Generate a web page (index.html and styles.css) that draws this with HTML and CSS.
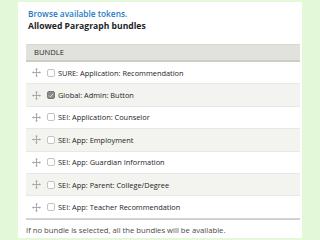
FILE: index.html
```html
<!DOCTYPE html>
<html>
<head>
<meta charset="utf-8">
<link rel="stylesheet" href="styles.css">
</head>
<body>
<div class="panel">
  <a class="tokens" href="#">Browse available tokens.</a>
  <div class="label">Allowed Paragraph bundles</div>
  <div class="table">
    <div class="head">BUNDLE</div>
    <div class="row"><span class="drag"><svg width="9" height="9" viewBox="0 0 9 9"><path d="M4.5 1v7M1 4.5h7" stroke="#a8a8a8" stroke-width="1"/><path d="M4.5 0 L3 1.6 H6 Z M4.5 9 L3 7.4 H6 Z M0 4.5 L1.6 3 V6 Z M9 4.5 L7.4 3 V6 Z" fill="#a8a8a8"/></svg></span><span class="cb"></span><span class="name">SURE: Application: Recommendation</span></div>
    <div class="row alt"><span class="drag"><svg width="9" height="9" viewBox="0 0 9 9"><path d="M4.5 1v7M1 4.5h7" stroke="#a8a8a8" stroke-width="1"/><path d="M4.5 0 L3 1.6 H6 Z M4.5 9 L3 7.4 H6 Z M0 4.5 L1.6 3 V6 Z M9 4.5 L7.4 3 V6 Z" fill="#a8a8a8"/></svg></span><span class="cb on"><svg width="7" height="7" viewBox="0 0 7 7"><path d="M1.2 3.6 L2.8 5.2 L5.8 1.6" stroke="#dcdcdc" stroke-width="1.1" fill="none"/></svg></span><span class="name">Global: Admin: Button</span></div>
    <div class="row"><span class="drag"><svg width="9" height="9" viewBox="0 0 9 9"><path d="M4.5 1v7M1 4.5h7" stroke="#a8a8a8" stroke-width="1"/><path d="M4.5 0 L3 1.6 H6 Z M4.5 9 L3 7.4 H6 Z M0 4.5 L1.6 3 V6 Z M9 4.5 L7.4 3 V6 Z" fill="#a8a8a8"/></svg></span><span class="cb"></span><span class="name">SEI: Application: Counselor</span></div>
    <div class="row alt"><span class="drag"><svg width="9" height="9" viewBox="0 0 9 9"><path d="M4.5 1v7M1 4.5h7" stroke="#a8a8a8" stroke-width="1"/><path d="M4.5 0 L3 1.6 H6 Z M4.5 9 L3 7.4 H6 Z M0 4.5 L1.6 3 V6 Z M9 4.5 L7.4 3 V6 Z" fill="#a8a8a8"/></svg></span><span class="cb"></span><span class="name">SEI: App: Employment</span></div>
    <div class="row"><span class="drag"><svg width="9" height="9" viewBox="0 0 9 9"><path d="M4.5 1v7M1 4.5h7" stroke="#a8a8a8" stroke-width="1"/><path d="M4.5 0 L3 1.6 H6 Z M4.5 9 L3 7.4 H6 Z M0 4.5 L1.6 3 V6 Z M9 4.5 L7.4 3 V6 Z" fill="#a8a8a8"/></svg></span><span class="cb"></span><span class="name">SEI: App: Guardian Information</span></div>
    <div class="row alt"><span class="drag"><svg width="9" height="9" viewBox="0 0 9 9"><path d="M4.5 1v7M1 4.5h7" stroke="#a8a8a8" stroke-width="1"/><path d="M4.5 0 L3 1.6 H6 Z M4.5 9 L3 7.4 H6 Z M0 4.5 L1.6 3 V6 Z M9 4.5 L7.4 3 V6 Z" fill="#a8a8a8"/></svg></span><span class="cb"></span><span class="name">SEI: App: Parent: College/Degree</span></div>
    <div class="row last"><span class="drag"><svg width="9" height="9" viewBox="0 0 9 9"><path d="M4.5 1v7M1 4.5h7" stroke="#a8a8a8" stroke-width="1"/><path d="M4.5 0 L3 1.6 H6 Z M4.5 9 L3 7.4 H6 Z M0 4.5 L1.6 3 V6 Z M9 4.5 L7.4 3 V6 Z" fill="#a8a8a8"/></svg></span><span class="cb"></span><span class="name">SEI: App: Teacher Recommendation</span></div>
  </div>
  <div class="help">If no bundle is selected, all the bundles will be available.</div>
</div>
</body>
</html>
```
FILE: styles.css
```css
html, body {
  margin: 0;
  padding: 0;
}
body {
  background: #e2f8d9;
  width: 320px;
  height: 240px;
  overflow: hidden;
  font-family: "Open Sans", "DejaVu Sans", sans-serif;
  padding: 2px 0 0 18px;
  box-sizing: border-box;
}
.panel {
  background: #fff;
  width: 284px;
  height: 236px;
  box-sizing: border-box;
  padding: 6px 2px 0 8px;
  display: flex;
  flex-direction: column;
}
.tokens {
  color: #1b7bc4;
  font-size: 8.3px;
  font-weight: 600;
  text-decoration: none;
  margin-left: 2px;
  line-height: 12px;
}
.label {
  color: #1e1e1e;
  font-size: 8.6px;
  font-weight: 700;
  margin-left: 2px;
  line-height: 12px;
}
.table {
  margin-top: 12px;
  border-bottom: 1px solid #cfcfcf;
  display: flex;
  flex-direction: column;
}
.head {
  background: #e2e2dd;
  border-top: 1px solid #d8d8d3;
  border-bottom: 2px solid #cdcdc8;
  height: 15px;
  line-height: 15px;
  padding-left: 8px;
  font-size: 7.6px;
  color: #2a2a2a;
}
.row {
  display: flex;
  align-items: center;
  height: 22.4px;
  box-sizing: border-box;
  border-bottom: 1px solid #e8e8e4;
  background: #fff;
}
.row.last {
  border-bottom: 1px solid #d6d6d6;
}
.row.alt {
  background: #f3f3ef;
}
.drag {
  width: 9px;
  height: 9px;
  margin-left: 6px;
  display: flex;
}
.cb {
  width: 6px;
  height: 6px;
  border: 1px solid #c4c4c4;
  border-radius: 2px;
  background: #fff;
  margin-left: 6px;
  display: flex;
  align-items: center;
  justify-content: center;
}
.cb.on {
  background: #8a8a8a;
  border-color: #7a7a7a;
}
.name {
  margin-left: 3px;
  font-size: 7.4px;
  color: #1e1e1e;
}
.help {
  margin-top: 5px;
  font-size: 7.7px;
  color: #4a4a4a;
  line-height: 11px;
}
```
